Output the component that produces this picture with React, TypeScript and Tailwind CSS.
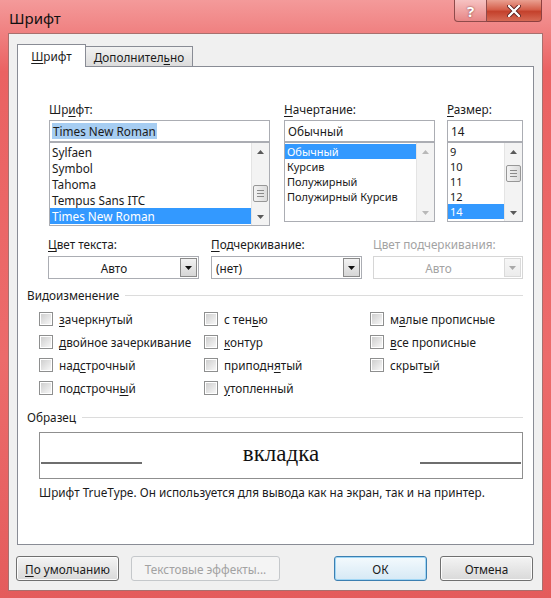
import React from "react";

const U = ({ children }: { children: React.ReactNode }) => <span className="underline underline-offset-2">{children}</span>;

function Arrow({ dir, color = "#4a4a4a" }: { dir: "up" | "down"; color?: string }) {
  return (
    <svg width="7" height="4" viewBox="0 0 7 4">
      {dir === "up" ? <polygon points="0,4 7,4 3.5,0" fill={color} /> : <polygon points="0,0 7,0 3.5,4" fill={color} />}
    </svg>
  );
}

function Scrollbar({ thumb, disabled }: { thumb?: string; disabled?: boolean }) {
  const c = disabled ? "#b8b8b8" : "#5a5a5a";
  return (
    <div className="flex w-[18px] flex-col border-l border-[#e4e4e4] bg-[#f3f3f3]">
      <div className="flex h-[17px] items-center justify-center">
        <Arrow dir="up" color={c} />
      </div>
      <div className="flex-1">
        {thumb && (
          <div className={`mx-px flex h-[17px] flex-col items-center justify-center gap-[2px] rounded-[2px] border border-[#979797] bg-gradient-to-r from-[#f3f3f3] to-[#dcdcdc] ${thumb}`}>
            <div className="h-px w-[7px] bg-[#8a8a8a]" />
            <div className="h-px w-[7px] bg-[#8a8a8a]" />
            <div className="h-px w-[7px] bg-[#8a8a8a]" />
          </div>
        )}
      </div>
      <div className="flex h-[17px] items-center justify-center">
        <Arrow dir="down" color={c} />
      </div>
    </div>
  );
}

function ListBox({ items, selected, rowH, height, scroll }: { items: string[]; selected: number; rowH: string; height: string; scroll: React.ReactNode }) {
  return (
    <div className={`flex border border-[#abadb3] bg-white ${height}`}>
      <div className="flex-1 overflow-hidden pt-px">
        {items.map((it, i) => (
          <div key={it} className={`${rowH} whitespace-nowrap px-[2px] ${i === selected ? "bg-[#3399ff] text-white" : ""}`}>
            {it}
          </div>
        ))}
      </div>
      {scroll}
    </div>
  );
}

function Combo({ value, center, disabled, w }: { value: string; center?: boolean; disabled?: boolean; w: string }) {
  return (
    <div className={`flex h-[23px] border bg-white ${w} ${disabled ? "border-[#d6d6d6] text-[#a3a3a3]" : "border-[#abadb3]"}`}>
      <div className={`flex flex-1 items-center px-[4px] ${center ? "justify-center" : ""}`}>{value}</div>
      <div className={`m-px flex w-[17px] items-center justify-center border bg-gradient-to-b ${disabled ? "border-[#dadada] from-[#f6f6f6] to-[#ececec]" : "border-[#8a8a8a] from-[#f2f2f2] to-[#d6d6d6]"}`}>
        <Arrow dir="down" color={disabled ? "#a9a9a9" : "#111"} />
      </div>
    </div>
  );
}

function Check({ children }: { children: React.ReactNode }) {
  return (
    <div className="flex h-[23px] items-center gap-[6px]">
      <div className="h-[14px] w-[14px] border border-[#8e8f8f] bg-white p-px">
        <div className="h-full w-full bg-gradient-to-br from-[#cfcfcf] to-[#f7f7f7]" />
      </div>
      <span>{children}</span>
    </div>
  );
}

function Btn({ children, w, variant }: { children: React.ReactNode; w: string; variant?: "ok" | "off" }) {
  const cls =
    variant === "off"
      ? "border-[#c5c8cb] bg-[#f4f4f4] text-[#a2a2a2]"
      : variant === "ok"
        ? "border-[#3c7fb1] bg-gradient-to-b from-[#f4fafd] to-[#d6e9f5] shadow-[inset_0_0_0_1px_#9fd6f5]"
        : "border-[#707070] bg-gradient-to-b from-[#f4f4f4] to-[#d9d9d9] shadow-[inset_0_0_0_1px_#fcfcfc]";
  return <div className={`flex h-[25px] items-center justify-center rounded-[3px] border ${cls} ${w}`}>{children}</div>;
}

export default function App() {
  return (
    <div
      className="flex h-[598px] w-[551px] flex-col overflow-hidden bg-[linear-gradient(to_bottom,#f49a9a_0%,#ea6262_12%,#ec6b6b_60%,#e45c5c_100%)] text-[11.75px] leading-[16px] text-[#1b1b1b]"
      style={{ fontFamily: '"Noto Sans", "Open Sans", sans-serif' }}
    >
      {/* title bar */}
      <div className="flex h-[33px] items-start justify-between">
        <div className="pl-[9px] pt-[8px] text-[15px] leading-[20px] text-[#111]">Шрифт</div>
        <div className="mr-[9px] flex">
          <div className="flex h-[22px] w-[33px] items-center justify-center rounded-bl-[4px] border border-t-0 border-[#8e4b4b] bg-gradient-to-b from-[#f6c2c2] to-[#e78686] text-[15px] font-bold text-white [text-shadow:0_0_2px_#6b3030]">
            ?
          </div>
          <div className="flex h-[22px] w-[55px] items-center justify-center rounded-br-[4px] border border-l-0 border-t-0 border-[#8e4040] bg-[linear-gradient(to_bottom,#eaa091_0%,#d5604c_45%,#c4412c_55%,#d66a55_100%)]">
            <svg width="14" height="12" viewBox="0 0 14 12">
              <path d="M2 1 L12 11 M12 1 L2 11" stroke="#5a1e1e" strokeWidth="4" strokeLinecap="round" />
              <path d="M2 1 L12 11 M12 1 L2 11" stroke="#fff" strokeWidth="2.4" strokeLinecap="round" />
            </svg>
          </div>
        </div>
      </div>

      {/* client area */}
      <div className="mx-[8px] flex h-[558px] flex-col border border-[#a8706e] bg-[#f0f0f0]">
        {/* tabs */}
        <div className="ml-[8px] mt-[10px] flex h-[22px] items-end">
          <div className="relative z-10 -mb-px flex h-[23px] w-[69px] items-center justify-center border border-b-0 border-[#898c95] bg-white">
            <span>
              <U>Ш</U>рифт
            </span>
          </div>
          <div className="flex h-[20px] w-[107px] items-center justify-center border border-b-0 border-l-0 border-[#898c95] bg-gradient-to-b from-[#f2f2f2] to-[#dcdcdc]">
            <span>
              Дополнител<U>ь</U>но
            </span>
          </div>
        </div>

        {/* tab page */}
        <div className="ml-[8px] flex h-[479px] w-[517px] flex-col border border-[#898c95] bg-white pl-[9px] pr-[10px] pt-[34px]">
          {/* font / style / size */}
          <div className="ml-[22px] flex gap-[14px]">
            <div className="flex w-[221px] flex-col">
              <div className="mb-[3px]">
                Шр<U>и</U>фт:
              </div>
              <div className="flex h-[22px] items-center border border-[#abadb3] px-[2px]">
                <span className="bg-[#a6cdf2] px-px">Times New Roman</span>
              </div>
              <ListBox
                height="h-[84px]"
                rowH="h-[16px] leading-[16px]"
                selected={4}
                items={["Sylfaen", "Symbol", "Tahoma", "Tempus Sans ITC", "Times New Roman"]}
                scroll={<Scrollbar thumb="mt-[25px]" />}
              />
            </div>
            <div className="flex w-[151px] flex-col">
              <div className="mb-[3px]">
                <U>Н</U>ачертание:
              </div>
              <div className="flex h-[22px] items-center border border-[#abadb3] px-[3px]">Обычный</div>
              <ListBox
                height="h-[80px]"
                rowH="h-[15px] leading-[15px] text-[11px]"
                selected={0}
                items={["Обычный", "Курсив", "Полужирный", "Полужирный Курсив"]}
                scroll={<Scrollbar disabled />}
              />
            </div>
            <div className="ml-[-2px] flex w-[76px] flex-col">
              <div className="mb-[3px]">
                <U>Р</U>азмер:
              </div>
              <div className="flex h-[22px] items-center border border-[#abadb3] px-[3px]">14</div>
              <ListBox
                height="h-[80px]"
                rowH="h-[15px] leading-[15px] text-[11px]"
                selected={4}
                items={["9", "10", "11", "12", "14"]}
                scroll={<Scrollbar thumb="mt-[5px]" />}
              />
            </div>
          </div>

          {/* colour / underline */}
          <div className="ml-[21px] mt-[10px] flex">
            <div className="flex w-[151px] flex-col gap-[4px]">
              <div>
                <U>Ц</U>вет текста:
              </div>
              <Combo w="w-[151px]" value="Авто" center />
            </div>
            <div className="ml-[12px] flex w-[151px] flex-col gap-[4px]">
              <div>
                <U>П</U>одчеркивание:
              </div>
              <Combo w="w-[151px]" value="(нет)" />
            </div>
            <div className="ml-[11px] flex w-[150px] flex-col gap-[4px]">
              <div className="text-[#a3a3a3]">Цвет подчеркивания:</div>
              <Combo w="w-[150px]" value="Авто" center disabled />
            </div>
          </div>

          {/* effects */}
          <div className="mt-[8px] flex items-center gap-[6px]">
            <span>Видоизменение</span>
            <div className="h-px flex-1 bg-[#dcdcdc]" />
          </div>
          <div className="ml-[12px] mt-[4px] grid grid-cols-[165px_166px_1fr]">
            <Check>
              <U>з</U>ачеркнутый
            </Check>
            <Check>
              с тен<U>ь</U>ю
            </Check>
            <Check>
              м<U>а</U>лые прописные
            </Check>
            <Check>
              <U>д</U>войное зачеркивание
            </Check>
            <Check>
              <U>к</U>онтур
            </Check>
            <Check>
              <U>в</U>се прописные
            </Check>
            <Check>
              над<U>с</U>трочный
            </Check>
            <Check>
              приподн<U>я</U>тый
            </Check>
            <Check>
              скрыт<U>ы</U>й
            </Check>
            <Check>
              подстрочн<U>ы</U>й
            </Check>
            <Check>
              <U>у</U>топленный
            </Check>
          </div>

          {/* sample */}
          <div className="mt-[10px] flex items-center gap-[6px]">
            <span>Образец</span>
            <div className="h-px flex-1 bg-[#dcdcdc]" />
          </div>
          <div className="ml-[12px] mt-[7px] flex h-[47px] items-end justify-between border border-[#8f8f8f] px-px pb-[14px]">
            <div className="h-[2px] w-[101px] bg-[#6e6e6e]" />
            <span className="mb-[-4px] text-[23px] leading-[28px] text-[#111]" style={{ fontFamily: '"Liberation Serif", serif' }}>
              вкладка
            </span>
            <div className="h-[2px] w-[101px] bg-[#6e6e6e]" />
          </div>
          <div className="ml-[12px] mt-[5px]">Шрифт TrueType. Он используется для вывода как на экран, так и на принтер.</div>
        </div>

        {/* buttons */}
        <div className="ml-[7px] mr-[9px] mt-[11px] flex">
          <Btn w="w-[103px]">
            <span>
              <U>П</U>о умолчанию
            </span>
          </Btn>
          <div className="ml-[12px]">
            <Btn w="w-[149px]" variant="off">
              Текстовые эффекты...
            </Btn>
          </div>
          <div className="ml-auto flex gap-[13px]">
            <Btn w="w-[93px]" variant="ok">
              ОК
            </Btn>
            <Btn w="w-[93px]">Отмена</Btn>
          </div>
        </div>
      </div>
    </div>
  );
}
